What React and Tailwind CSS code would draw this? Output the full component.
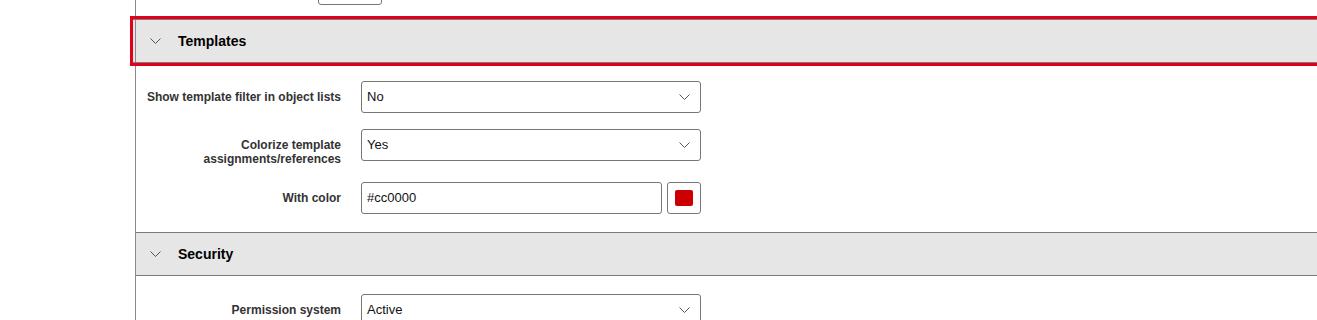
import React from 'react';

function Chevron({ className = '' }) {
    return (
        <svg width="11" height="6" viewBox="0 0 11 6" className={className} fill="none">
            <polyline points="0.5,0.5 5.5,5.5 10.5,0.5" stroke="#555" strokeWidth="1" />
        </svg>
    );
}

function Select({ value }) {
    return (
        <div className="h-[32px] w-[340px] flex items-center justify-between border border-[#767676] rounded-[3px] bg-white pl-[5px] pr-[10px] text-[13px] text-[#111]">
            <span>{value}</span>
            <Chevron />
        </div>
    );
}

function SectionHeader({ title, focused }) {
    if (focused) {
        return (
            <div className="-ml-[3px] h-[44px] flex bg-[#e5e6e5] border-y border-[#7b7b7b] outline-[3px] outline-solid outline-[#e2001a]">
                <div className="ml-[2px] flex-1 flex items-center border-l border-[#8a8a8a] pl-[14px]">
                    <Chevron />
                    <span className="ml-[17px] text-[14px] font-bold text-black">{title}</span>
                </div>
            </div>
        );
    }
    return (
        <div className="h-[44px] flex items-center bg-[#e5e6e5] border-y border-[#7b7b7b] pl-[14px]">
            <Chevron />
            <span className="ml-[17px] text-[14px] font-bold text-black">{title}</span>
        </div>
    );
}

function Row({ label, children, className = '' }) {
    return (
        <div className={'grid grid-cols-[205px_340px] gap-x-[20px] ' + className}>
            <label className="pt-[9px] text-right text-[12px] leading-[14px] font-bold text-[#333]">{label}</label>
            <div>{children}</div>
        </div>
    );
}

export default function App() {
    return (
        <div className="h-[320px] overflow-hidden bg-white font-['Liberation_Sans',Arial,sans-serif]">
            <div className="ml-[135px] h-[400px] flex flex-col border-l border-[#8a8a8a]">
                {/* tail of the previous section */}
                <div className="-mt-[27px] ml-[182px] h-[32px] w-[64px] shrink-0 border border-[#767676] rounded-[3px]"></div>
                <div className="mt-[14px]">
                    <SectionHeader title="Templates" focused />
                </div>
                <div className="pt-[18px] pb-[18px] flex flex-col gap-[16px]">
                    <Row label="Show template filter in object lists">
                        <Select value="No" />
                    </Row>
                    <Row label={<>Colorize template<br />assignments/references</>}>
                        <Select value="Yes" />
                    </Row>
                    <Row label="With color">
                        <div className="flex gap-[5px]">
                            <div className="h-[32px] w-[302px] flex items-center border border-[#767676] rounded-[3px] pl-[5px] text-[13px] text-[#111]">
                                #cc0000
                            </div>
                            <div className="h-[32px] w-[34px] flex items-center justify-center border border-[#767676] rounded-[3px]">
                                <div className="h-[16px] w-[18px] rounded-[2px] bg-[#cc0000]"></div>
                            </div>
                        </div>
                    </Row>
                </div>
                <SectionHeader title="Security" />
                <div className="pt-[18px] flex flex-col gap-[16px]">
                    <Row label="Permission system">
                        <Select value="Active" />
                    </Row>
                </div>
            </div>
        </div>
    );
}
